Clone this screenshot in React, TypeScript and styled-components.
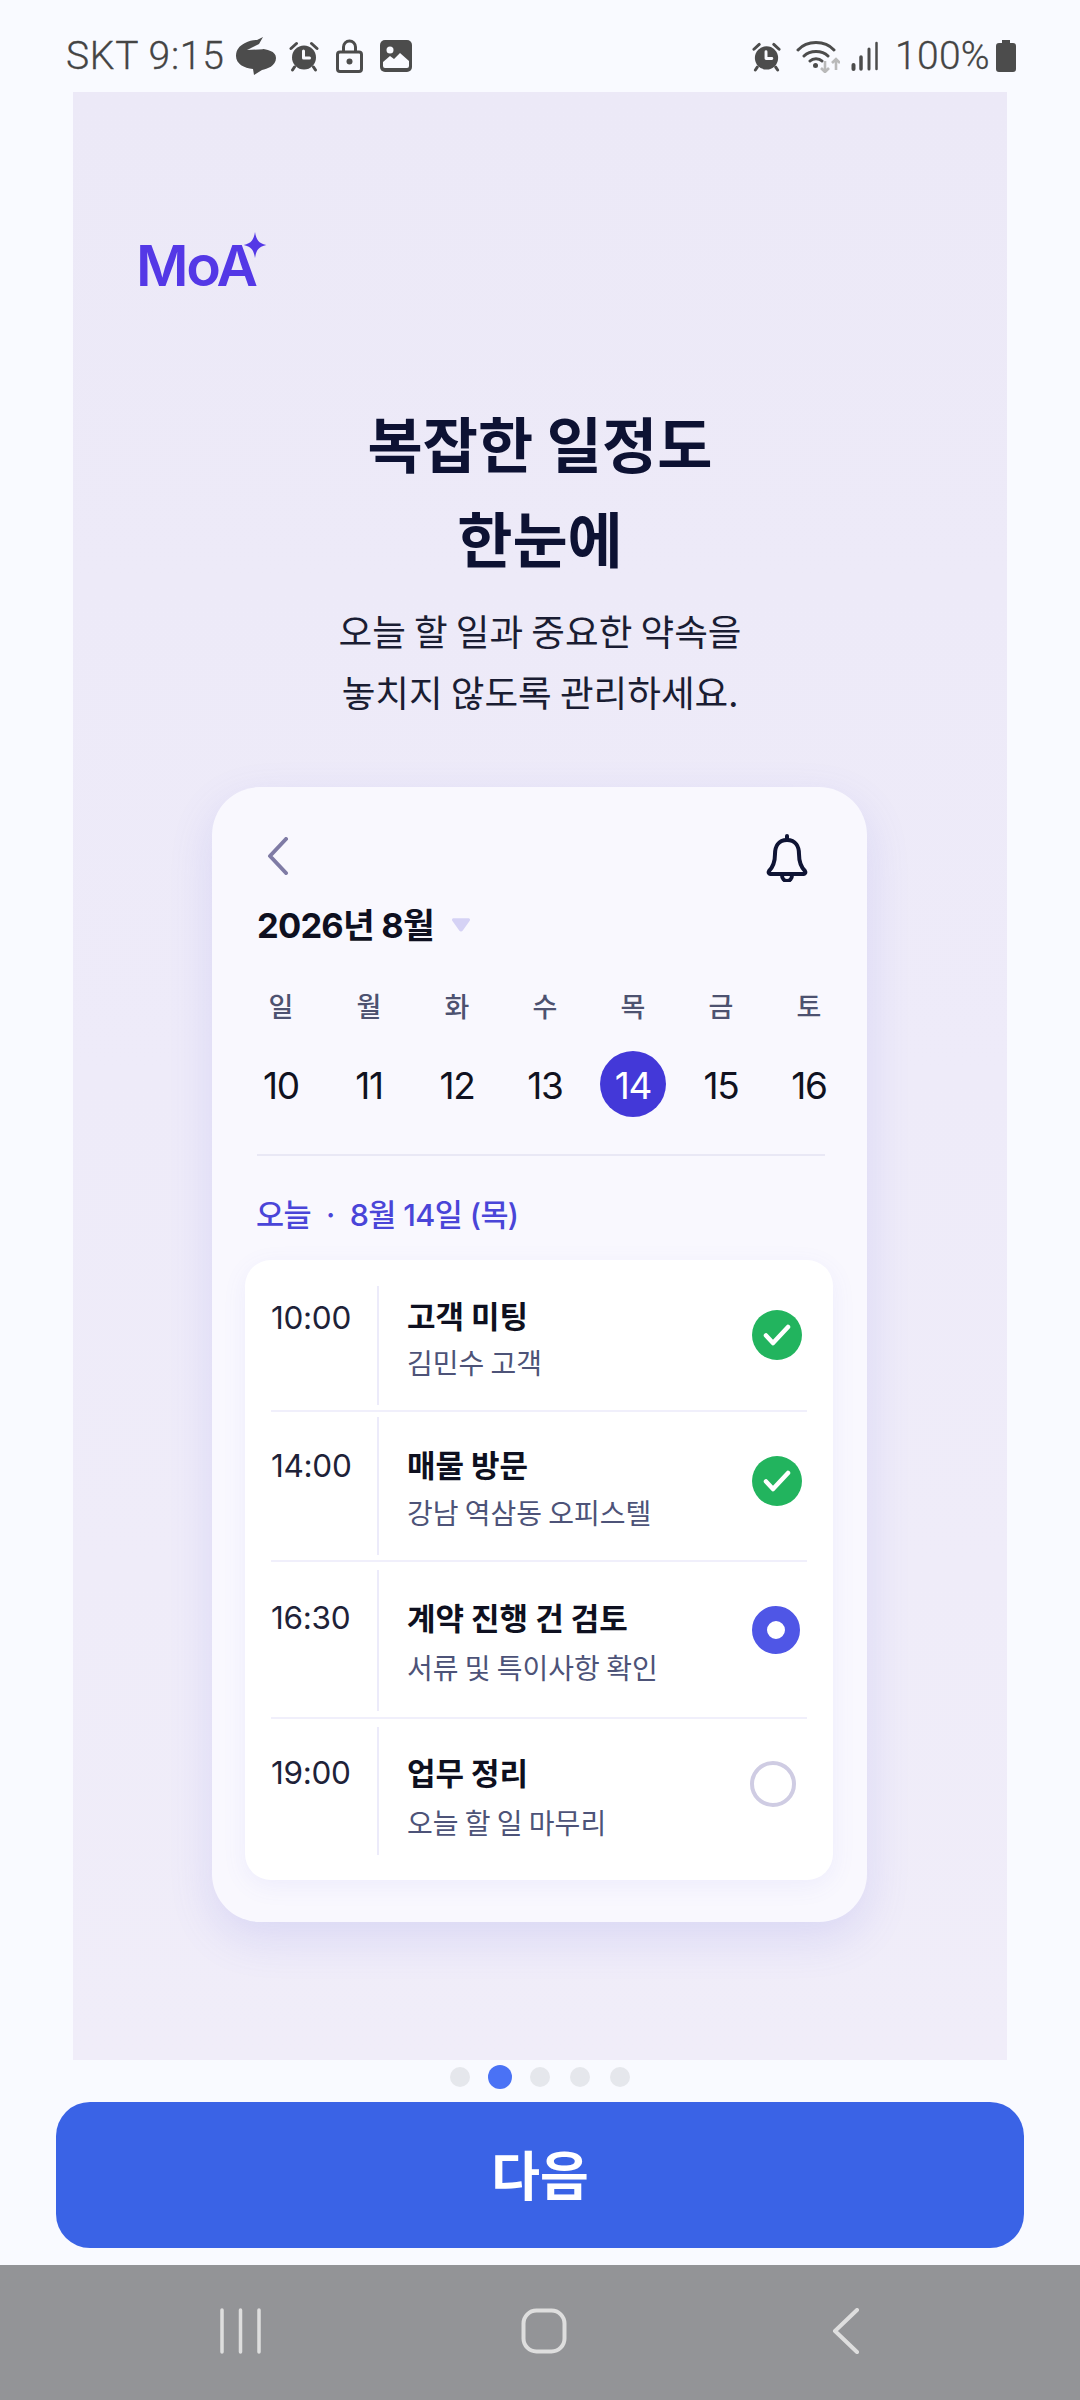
import React from "react";
import styled, { createGlobalStyle } from "styled-components";

const Global = createGlobalStyle`
  html, body { margin: 0; padding: 0; background: #f9faff; }
  body { font-family: Inter, "Noto Sans CJK KR", sans-serif; }
  * { box-sizing: border-box; }
`;

const Screen = styled.div`
  width: 1080px; height: 2400px; display: flex; flex-direction: column; background: #f9faff; overflow: hidden;
`;
const StatusBar = styled.div`
  height: 92px; flex: none; display: flex; align-items: center; justify-content: space-between;
  padding: 20px 64px 0 66px; color: #4c4c4c;
`;
const StatusGroup = styled.div`
  display: flex; align-items: center; gap: ${p => p.$gap ?? 12}px; margin-left: ${p => p.$left ?? 0}px;
`;
const StatusText = styled.span`
  font-family: Roboto, sans-serif; font-size: 39px; font-weight: 300; line-height: 40px; letter-spacing: ${p => p.$spacing ?? 0.3}px; color: #444;
  -webkit-text-stroke: 0.3px #444;
`;
const Panel = styled.main`
  flex: none; width: 934px; height: 1968px; margin-left: 73px; display: flex; flex-direction: column;
  padding-top: 145px; background: linear-gradient(180deg, #ece9f7 0%, #eeebf9 50%, #f0edf9 100%);
`;
const Logo = styled.div`
  align-self: flex-start; margin-left: 63px; position: relative; font-size: 57px; line-height: 58px; font-weight: 600;
  letter-spacing: -2.4px; color: #5438e6;
`;
const LogoStar = styled.svg`
  position: absolute; left: 107px; top: -5px; width: 24px; height: 26px;
`;
const Title = styled.h1`
  margin: 99px 0 0; text-align: center; font-family: "Noto Sans CJK KR", sans-serif; font-size: 60px; line-height: 95px;
  font-weight: 700; color: #0d1233;
`;
const Subtitle = styled.p`
  margin: 16px 0 0; text-align: center; font-family: "Noto Sans CJK KR", sans-serif; font-size: 36.6px; line-height: 61px;
  font-weight: 400; color: #1a1d33;
`;
const Card = styled.section`
  width: 655px; height: 1135px; margin: 65px 0 0 139px; border-radius: 48px; background: #f9f8fe;
  box-shadow: 0 16px 44px rgba(105, 105, 225, 0.16); display: flex; flex-direction: column; padding-top: 46px;
`;
const TopRow = styled.div`
  height: 46px; padding: 0 59px 0 55px; display: flex; justify-content: space-between; align-items: center;
`;
const Bell = styled.svg`
  margin-top: 3px;
`;
const MonthRow = styled.div`
  margin: 25px 0 0 45px; display: flex; align-items: center; gap: 18px; height: 44px;
`;
const MonthText = styled.span`
  font-size: 34.5px; line-height: 44px; font-weight: 700; letter-spacing: -0.8px; color: #0e1020;
`;
const MonthCaret = styled.svg`
  margin-top: -3px;
`;
const WeekGrid = styled.div`
  display: grid; grid-template-columns: repeat(7, 88px); margin: ${p => p.$top}px 0 0 25px; align-items: center; justify-items: center;
`;
const WeekDay = styled.span`
  font-size: 27px; line-height: 36px; color: #4d5270; font-weight: 500;
`;
const DayCell = styled.span`
  width: 66px; height: 66px; border-radius: 50%; display: flex; align-items: center; justify-content: center; padding-top: 2px;
  font-size: 37px; font-weight: 400; letter-spacing: -1.2px;
  color: ${p => (p.$active ? "#ffffff" : "#101220")};
  background: ${p => (p.$active ? "#4338d8" : "transparent")};
`;
const Divider = styled.div`
  height: 2px; margin: 37px 42px 0 45px; background: #e9e8f5;
`;
const TodayLabel = styled.div`
  margin: 39px 0 0 44px; font-size: 30.5px; line-height: 40px; font-weight: 500; letter-spacing: -0.6px; color: #4a45d8;
`;
const List = styled.div`
  width: 588px; height: 620px; margin: 25px 0 0 33px; border-radius: 26px; background: #fff;
  box-shadow: 0 6px 24px rgba(105, 105, 225, 0.08); padding: 0 26px;
`;
const Row = styled.div`
  height: ${p => p.$h}px; display: grid; grid-template-columns: 106px 1fr 52px; padding-top: ${p => p.$lineTop}px;
  padding-bottom: ${p => p.$lineBottom}px; border-bottom: ${p => (p.$last ? "none" : "2px solid #f0effb")};
`;
const Time = styled.div`
  padding-top: ${p => p.$top}px; font-size: 31.5px; line-height: 40px; font-weight: 400; letter-spacing: -0.3px; color: #1e2238;
`;
const Body = styled.div`
  border-left: 2px solid #ecebfa; padding: ${p => p.$top}px 0 0 28px; font-family: "Noto Sans CJK KR", sans-serif;
`;
const RowTitle = styled.div`
  font-size: 31px; line-height: 40px; font-weight: 700; color: #0e1020;
`;
const RowSub = styled.div`
  margin-top: ${p => p.$gap}px; font-size: 28px; line-height: 36px; font-weight: 400; color: #4d5378;
`;
const StatusSlot = styled.div`
  margin-top: ${p => p.$top}px; margin-left: ${p => p.$left}px;
`;
const Badge = styled.div`
  width: 50px; height: 50px; border-radius: 50%; background: #22b45e; display: flex; align-items: center; justify-content: center;
`;
const Radio = styled.div`
  width: 48px; height: 48px; border-radius: 50%; border: 15px solid #4f56e6; background: #fff;
`;
const Empty = styled.div`
  width: 46px; height: 46px; border-radius: 50%; border: 4px solid #cfcce3; background: #fff;
`;
const Dots = styled.div`
  height: 42px; padding-bottom: 8px; flex: none; display: flex; align-items: center; justify-content: center; gap: 20px;
`;
const Dot = styled.span`
  width: ${p => (p.$active ? 24 : 20)}px; height: ${p => (p.$active ? 24 : 20)}px; margin: 0 ${p => (p.$active ? -2 : 0)}px; border-radius: 50%;
  background: ${p => (p.$active ? "#4a72f5" : "#e5e7ec")};
`;
const NextButton = styled.button`
  flex: none; width: 968px; height: 146px; margin-left: 56px; border: 0; border-radius: 34px; background: #3a63e6; color: #fff;
  font-family: "Noto Sans CJK KR", sans-serif; font-size: 53px; font-weight: 600; padding: 0 0 4px;
`;
const NavBar = styled.nav`
  margin-top: 17px; flex: none; height: 135px; background: #939497; display: flex; align-items: flex-start; padding: 43px 0 0 219px;
`;
const NavSlot = styled.div`
  display: flex; margin-left: ${p => p.$left ?? 0}px;
`;
const StatusIcon = styled.svg`
  margin-left: ${p => p.$left ?? 0}px; flex: none;
`;

const Alarm = ({ size, left }: { size: number; left?: number }) => (
  <StatusIcon $left={left} width={size} height={size} viewBox="0 0 32 32" fill="none">
    <circle cx="16" cy="17.5" r="12" fill="#4c4c4c" />
    <path d="M3 8.5 8.5 3.5M29 8.5 23.500 3.500M6.500 27 4.500 30M25.500 27l2 3" stroke="#4c4c4c" strokeWidth="3" strokeLinecap="round" />
    <path d="M15.500 11v7h6" stroke="#f9faff" strokeWidth="3" fill="none" strokeLinecap="round" strokeLinejoin="round" />
  </StatusIcon>
);

const days = [10, 11, 12, 13, 14, 15, 16];
const weekdays = ["일", "월", "화", "수", "목", "금", "토"];
const rows = [
  { time: "10:00", title: "고객 미팅", sub: "김민수 고객", h: 152, lineTop: 26, lineBottom: 5, timeTop: 12, textTop: 9, gap: 9, kind: "done", iconTop: 24 },
  { time: "14:00", title: "매물 방문", sub: "강남 역삼동 오피스텔", h: 150, lineTop: 5, lineBottom: 5, timeTop: 29, textTop: 27, gap: 10, kind: "done", iconTop: 39 },
  { time: "16:30", title: "계약 진행 건 검토", sub: "서류 및 특이사항 확인", h: 157, lineTop: 8, lineBottom: 6, timeTop: 28, textTop: 27, gap: 12, kind: "now", iconTop: 36 },
  { time: "19:00", title: "업무 정리", sub: "오늘 할 일 마무리", h: 161, lineTop: 8, lineBottom: 25, timeTop: 26, textTop: 25, gap: 12, kind: "todo", iconTop: 34 },
];

export default function App() {
  return (
    <Screen>
      <Global />
      <StatusBar>
        <StatusGroup $gap={0}>
          <StatusText $spacing={0.7}>SKT 9:15</StatusText>
          <StatusIcon $left={12} width="40" height="38" viewBox="0 0 40 38">
            <path d="M0 19C0 13 3 9 9 6c4-2 8-3 12-3l6-3-4 7-12 6 21-1-9 0c8 0 17 2 17 9 0 8-9 11-14 12l-8 5-1-6C8 31 0 27 0 19Z" fill="#4c4c4c" />
          </StatusIcon>
          <Alarm size={32} left={12} />
          <StatusIcon $left={16} width="27" height="34" viewBox="0 0 27 34" fill="none">
            <path d="M7.500 13V8a6 6 0 0 1 12 0v5" stroke="#4c4c4c" strokeWidth="3" />
            <rect x="1.500" y="13" width="24" height="19.500" rx="2.500" stroke="#4c4c4c" strokeWidth="3" />
            <circle cx="13.500" cy="22.500" r="3" fill="#4c4c4c" />
          </StatusIcon>
          <StatusIcon $left={17} width="32" height="32" viewBox="0 0 32 32">
            <rect width="32" height="32" rx="5" fill="#4c4c4c" />
            <circle cx="10" cy="10" r="3.500" fill="#f9faff" />
            <path d="M3 26v-4l7-6 4 3 6-6 9 8v5a2 2 0 0 1-2 2H5a2 2 0 0 1-2-2Z" fill="#f9faff" />
          </StatusIcon>
        </StatusGroup>
        <StatusGroup $gap={0}>
          <Alarm size={31} />
          <StatusIcon $left={14} width="44" height="34" viewBox="0 0 44 34" fill="none">
            <path d="M2 11C11 1 29 1 38 11M8 17c6-6 18-6 24 0M14 22c3-3 9-3 12 0" stroke="#4c4c4c" strokeWidth="3" strokeLinecap="round" />
            <circle cx="19.500" cy="26.500" r="2.500" fill="#4c4c4c" />
            <path d="M29 22v11M25 29l4 4 4-4" stroke="#b9b9b9" strokeWidth="2.600" />
            <path d="M40 31V20M36 24l4-4 4 4" stroke="#b9b9b9" strokeWidth="2.600" />
          </StatusIcon>
          <StatusIcon $left={11} width="28" height="30" viewBox="0 0 28 30" fill="none" stroke="#4c4c4c" strokeLinecap="round">
            <path d="M2.500 24v4" strokeWidth="4" />
            <path d="M10 16v12" strokeWidth="3.500" />
            <path d="M18 8v20" strokeWidth="3" />
            <path d="M25.500 2v26" strokeWidth="2.500" />
          </StatusIcon>
          <StatusGroup $gap={6} $left={16}>
            <StatusText>100%</StatusText>
            <svg width="20" height="32" viewBox="0 0 20 32">
              <path d="M6 0h8v3h3a3 3 0 0 1 3 3v23a3 3 0 0 1-3 3H3a3 3 0 0 1-3-3V6a3 3 0 0 1 3-3h3Z" fill="#4c4c4c" />
            </svg>
          </StatusGroup>
        </StatusGroup>
      </StatusBar>

      <Panel>
        <Logo>
          MoA
          <LogoStar viewBox="0 0 26 30">
            <path d="M13 0c1.500 9 4 13 13 15-9 2-11.500 6-13 15-1.500-9-4-13-13-15C9 13 11.500 9 13 0Z" fill="#5438e6" />
          </LogoStar>
        </Logo>
        <Title>복잡한 일정도<br />한눈에</Title>
        <Subtitle>오늘 할 일과 중요한 약속을<br />놓치지 않도록 관리하세요.</Subtitle>

        <Card>
          <TopRow>
            <svg width="22" height="38" viewBox="0 0 22 38" fill="none">
              <path d="M19 2 3 19l16 17" stroke="#7f7ba5" strokeWidth="4" strokeLinecap="round" strokeLinejoin="round" />
            </svg>
            <Bell width="42" height="48" viewBox="0 0 42 48" fill="none" stroke="#0f1434" strokeWidth="4" strokeLinejoin="round">
              <path d="M21 6C12 6 9 13 9 20c0 8-2 13-6 17-1 1.500 0 3 1 3h34c1 0 2-1.500 1-3-4-4-6-9-6-17 0-7-3-14-12-14Z" />
              <path d="M21 2v4" strokeLinecap="round" />
              <path d="M16 41c0 8 10 8 10 0" />
            </Bell>
          </TopRow>
          <MonthRow>
            <MonthText>2026년 8월</MonthText>
            <MonthCaret width="18" height="14" viewBox="0 0 20 15">
              <path d="M2 0h16c2 0 2.500 1.500 1.500 3L12 13.500c-1 1.500-3 1.500-4 0L.5 3C-.5 1.500 0 0 2 0Z" fill="#d5d2f5" />
            </MonthCaret>
          </MonthRow>
          <WeekGrid $top={42}>
            {weekdays.map(d => <WeekDay key={d}>{d}</WeekDay>)}
          </WeekGrid>
          <WeekGrid $top={25}>
            {days.map(d => <DayCell key={d} $active={d === 14}>{d}</DayCell>)}
          </WeekGrid>
          <Divider />
          <TodayLabel>오늘 &nbsp;·&nbsp; 8월 14일 (목)</TodayLabel>
          <List>
            {rows.map((r, i) => (
              <Row key={r.time} $h={r.h} $lineTop={r.lineTop} $lineBottom={r.lineBottom} $last={i === rows.length - 1}>
                <Time $top={r.timeTop}>{r.time}</Time>
                <Body $top={r.textTop}>
                  <RowTitle>{r.title}</RowTitle>
                  <RowSub $gap={r.gap}>{r.sub}</RowSub>
                </Body>
                <StatusSlot $top={r.iconTop} $left={r.kind === "todo" ? -5 : -3}>
                  {r.kind === "done" && (
                    <Badge>
                      <svg width="28" height="22" viewBox="0 0 28 22" fill="none">
                        <path d="M3 11.500 10 19 25 3" stroke="#fff" strokeWidth="4.500" strokeLinecap="round" strokeLinejoin="round" />
                      </svg>
                    </Badge>
                  )}
                  {r.kind === "now" && <Radio />}
                  {r.kind === "todo" && <Empty />}
                </StatusSlot>
              </Row>
            ))}
          </List>
        </Card>
      </Panel>

      <Dots>
        <Dot /><Dot $active /><Dot /><Dot /><Dot />
      </Dots>
      <NextButton>다음</NextButton>
      <NavBar>
        <NavSlot>
          <svg width="42" height="46" viewBox="0 0 42 46" fill="none" stroke="#dedede" strokeWidth="3.500" strokeLinecap="round">
            <path d="M3 2v42M21.500 2v42M40 2v42" />
          </svg>
        </NavSlot>
        <NavSlot $left={260}>
          <svg width="46" height="46" viewBox="0 0 46 46" fill="none">
            <rect x="2.500" y="2.500" width="41" height="41" rx="13" stroke="#dedede" strokeWidth="4" />
          </svg>
        </NavSlot>
        <NavSlot $left={265}>
          <svg width="28" height="46" viewBox="0 0 28 46" fill="none">
            <path d="M25 2 3 23l22 21" stroke="#dedede" strokeWidth="4" strokeLinecap="round" strokeLinejoin="round" />
          </svg>
        </NavSlot>
      </NavBar>
    </Screen>
  );
}
